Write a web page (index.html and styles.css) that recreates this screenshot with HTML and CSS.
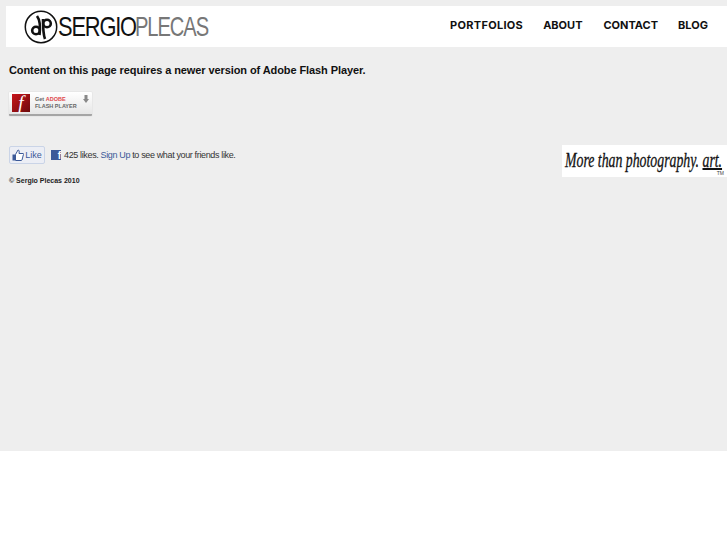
FILE: index.html
```html
<!DOCTYPE html>
<html lang="en">
<head>
    <meta charset="UTF-8">
    <title>Sergio Plecas</title>
    <link rel="stylesheet" href="styles.css">
</head>
<body>
    <div class="page">
        <!-- header -->
        <div class="top-bar">
            <a class="logo" href="#">
                <svg class="logo-mark" width="34" height="34" viewBox="0 0 34 34">
                    <circle cx="17" cy="17" r="15.7" fill="none" stroke="#111" stroke-width="1.5"/>
                    <circle cx="12" cy="20.5" r="3.8" fill="none" stroke="#111" stroke-width="2.6"/>
                    <path d="M15.5 25 C16.5 17 16 10 13 6" fill="none" stroke="#111" stroke-width="2.6"/>
                    <circle cx="23" cy="13.5" r="3.8" fill="none" stroke="#111" stroke-width="2.6"/>
                    <path d="M19 9 C19 18 19 24 21 29" fill="none" stroke="#111" stroke-width="2.6"/>
                </svg>
                <span class="logo-first"><span>SERGIO</span></span><span class="logo-last"><span>PLECAS</span></span>
            </a>
            <div class="menu">
                <a href="#">PORTFOLIOS</a>
                <a href="#">ABOUT</a>
                <a href="#">CONTACT</a>
                <a href="#">BLOG</a>
            </div>
        </div>

        <div class="contenido">
            <h1 class="aviso">Content on this page requires a newer version of Adobe Flash Player.</h1>

            <a class="flash-btn" href="#">
                <span class="flash-icon">f</span>
                <span class="flash-text">
                    <span>Get <b>ADOBE</b></span>
                    <span>FLASH PLAYER</span>
                </span>
                <svg class="flash-arrow" width="6" height="8" viewBox="0 0 6 8">
                    <path d="M1.5 0H4.5V4H6L3 8L0 4H1.5Z" fill="#888"/>
                </svg>
            </a>

            <div class="fila">
                <div class="izquierda">
                    <div class="social">
                        <a class="like-btn" href="#">
                            <svg width="12" height="12" viewBox="0 0 12 12">
                                <path d="M0.5 5.5H3V11.5H0.5Z" fill="#3b5998"/>
                                <path d="M3.5 5.5L6 1C7.2 1 7.4 2.2 7 4.5H11C11.8 4.5 11.8 5.5 11.3 6L10 11C9.8 11.4 9.5 11.5 9 11.5H3.5Z" fill="#fff" stroke="#3b5998"/>
                            </svg>
                            Like
                        </a>
                        <span class="fb-icon">f</span>
                        <span class="like-text">425 likes. <a href="#">Sign Up</a> to see what your friends like.</span>
                    </div>
                    <p class="copy">© Sergio Plecas 2010</p>
                </div>
                <div class="lema">
                    <span class="lema-text">More than photography. <u>art.</u></span>
                    <small>TM</small>
                </div>
            </div>
        </div>
    </div>
</body>
</html>
```

FILE: styles.css
```css
/* General */
html, body {
    height: 100%;
}

body {
    margin: 0;
    background-color: white;
    font-family: "Liberation Sans", Arial, sans-serif;
    color: #111;
}

a {
    text-decoration: none;
    color: inherit;
}

.page {
    height: 451px;
    padding: 6px 0 0 6px;
    box-sizing: border-box;
    background-color: #eeeeee;
}

/* Header */
.top-bar {
    height: 41px;
    background-color: white;
    display: flex;
    align-items: center;
    justify-content: space-between;
    padding: 0 19px 0 18px;
}

.logo {
    display: flex;
    align-items: center;
}

.logo-first,
.logo-last {
    display: block;
    font-size: 28px;
    line-height: 34px;
    letter-spacing: -1.5px;
    white-space: nowrap;
}

.logo-first span,
.logo-last span {
    display: inline-block;
    transform-origin: left center;
}

.logo-first {
    width: 77px;
    color: #111;
}

.logo-first span {
    transform: scaleX(0.78);
}

.logo-last {
    width: 74px;
    color: #777;
}

.logo-last span {
    transform: scaleX(0.72);
}

.menu {
    display: flex;
    gap: 20px;
    padding-bottom: 3px;
}

.menu a {
    font-family: "Inter", "Liberation Sans", sans-serif;
    font-size: 11px;
    font-weight: 700;
    color: #111;
}

.menu a:first-child {
    letter-spacing: 0.3px;
}

.menu a:nth-child(3) {
    margin-left: 1px;
}

/* Content */
.contenido {
    padding: 16px 0 0 3px;
}

.aviso {
    margin: 0;
    font-size: 11px;
    line-height: 14px;
    font-weight: 700;
    letter-spacing: -0.09px;
}

.flash-btn {
    width: 83px;
    height: 24px;
    margin-top: 15px;
    display: flex;
    align-items: center;
    gap: 3px;
    position: relative;
    box-sizing: border-box;
    padding-left: 3px;
    background: linear-gradient(#ffffff, #e6e6e6);
    border-bottom: 2px solid #a5a5a5;
    border-radius: 1px;
    box-shadow: 0 0 1px #aaa;
}

.flash-icon {
    width: 18px;
    height: 18px;
    background: linear-gradient(135deg, #c8151b, #6d0a0c);
    color: white;
    font-family: "Liberation Serif", serif;
    font-style: italic;
    font-size: 19px;
    line-height: 18px;
    text-align: center;
}

.flash-text {
    display: flex;
    flex-direction: column;
    margin-left: 2px;
    font-size: 5.5px;
    line-height: 7px;
    font-weight: 700;
    color: #666;
}

.flash-text b {
    color: #e0464a;
}

.flash-arrow {
    position: absolute;
    top: 3px;
    right: 3px;
}

.fila {
    display: flex;
    justify-content: space-between;
    margin-top: 29px;
}

.social {
    display: flex;
    align-items: center;
    margin-top: 1px;
}

.like-btn {
    width: 36px;
    height: 18px;
    box-sizing: border-box;
    display: flex;
    align-items: center;
    justify-content: center;
    gap: 1px;
    background-color: #eceef5;
    border: 1px solid #cad4e7;
    border-radius: 2px;
    font-size: 9px;
    color: #3b5998;
}

.fb-icon {
    width: 10px;
    height: 10px;
    margin-left: 6px;
    background-color: #3b5998;
    color: white;
    font-size: 10px;
    font-weight: 700;
    line-height: 12px;
    text-align: right;
    overflow: hidden;
}

.like-text {
    margin-left: 3px;
    padding-bottom: 1px;
    font-size: 9px;
    color: #333;
    letter-spacing: -0.36px;
}

.like-text a {
    color: #3b5998;
}

.copy {
    margin: 12px 0 0;
    font-size: 7px;
    line-height: 9px;
    font-weight: 700;
    color: #222;
}

/* Lema manuscrito */
.lema {
    width: 165px;
    height: 32px;
    position: relative;
    background-color: white;
    overflow: hidden;
    white-space: nowrap;
    padding-left: 3px;
    box-sizing: border-box;
}

.lema-text {
    display: inline-block;
    font-family: "Liberation Serif", serif;
    font-style: italic;
    font-size: 20px;
    line-height: 30px;
    color: #111;
    -webkit-text-stroke: 0.3px #111;
    transform: scaleX(0.69);
    transform-origin: left center;
}

.lema small {
    position: absolute;
    right: 3px;
    bottom: 0;
    font-size: 5px;
    line-height: 7px;
    color: #444;
}
```
